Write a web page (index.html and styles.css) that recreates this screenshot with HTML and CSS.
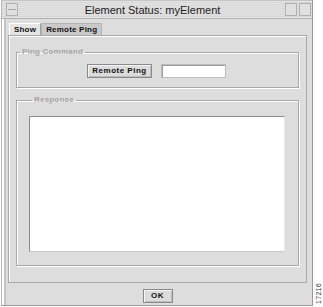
FILE: index.html
```
<!DOCTYPE HTML>
<html>
<head>
	<title>Element Status</title>
	<link rel="stylesheet" href="styles.css">
</head>
<body>
<div class="pencere">
	<div class="baslik">
		<span class="kutu kapat"><span class="cizgi"></span></span>
		<span class="baslikYazi">Element Status: myElement</span>
		<span class="kutu kucult"></span>
		<span class="kutu buyut"></span>
	</div>

	<div class="sekmeler">
		<span class="sekme secili">Show</span>
		<span class="sekme">Remote Ping</span>
	</div>

	<div class="panel">
		<fieldset class="grup ping">
			<legend>Ping Command</legend>
			<div class="satir">
				<button class="dugme genis">Remote Ping</button>
				<input class="alan" type="text">
			</div>
		</fieldset>

		<fieldset class="grup cevap">
			<legend>Response</legend>
			<div class="beyaz"></div>
		</fieldset>
	</div>

	<div class="alt">
		<button class="dugme tamam">OK</button>
	</div>
</div>
<span class="numara">17216</span>
</body>
</html>
```

FILE: styles.css
```
body {
	margin: 0;
	background-color: #ffffff;
	font-family: "Liberation Sans", sans-serif;
}

.pencere {
	width: 310px;
	height: 305px;
	background-color: #dddddd;
	border-left: 1px solid #b8b8b8;
	border-right: 1px solid #9a9a9a;
	border-bottom: 1px solid #9a9a9a;
	box-shadow: inset 2px 0 0 #ffffff, inset 4px 0 0 #c4c4c4;
	display: flex;
	flex-direction: column;
	margin-left: 1px;
}

.baslik {
	height: 17px;
	flex-shrink: 0;
	border-top: 1px solid #c4c4c4;
	border-bottom: 1px solid #b0b0b0;
	background: repeating-linear-gradient(#e4e4e4 0px, #e4e4e4 1px, #d6d6d6 1px, #d6d6d6 2px);
	display: flex;
	align-items: center;
	padding: 0 1px 0 4px;
}

.baslikYazi {
	flex: 1;
	text-align: center;
	font-size: 11px;
	color: #222222;
	background-color: #dddddd;
	margin: 0 6px;
	padding-left: 2px;
}

.kutu {
	width: 10px;
	height: 11px;
	border: 1px solid #b0b0b0;
	background-color: #e0e0e0;
	display: flex;
	align-items: center;
	justify-content: center;
}

.cizgi {
	width: 8px;
	height: 1px;
	background-color: #a8a8a8;
}

.kucult {
	margin-right: 2px;
}

.sekmeler {
	display: flex;
	flex-shrink: 0;
	margin: 4px 0 0 7px;
	height: 12px;
}

.sekme {
	font-size: 8px;
	font-weight: bold;
	letter-spacing: 0.2px;
	color: #111111;
	padding: 0 4px;
	line-height: 12px;
	border: 1px solid #b4b4b4;
	border-bottom: none;
	background-color: #c9c9c9;
}

.secili {
	background-color: #e4e4e4;
	border-color: #ffffff #a0a0a0 #ffffff #ffffff;
}

.panel {
	flex-shrink: 0;
	box-sizing: border-box;
	margin: 0 5px 0 6px;
	height: 248px;
	border: 1px solid #a8a8a8;
	box-shadow: inset 1px 1px 0 #ffffff;
	padding: 10px 7px 0 7px;
	display: flex;
	flex-direction: column;
}

.grup {
	flex-shrink: 0;
	margin: 0;
	padding: 0;
	border: 1px solid #a8a8a8;
	box-shadow: inset 1px 1px 0 #ffffff, 1px 1px 0 #ffffff;
}

legend {
	font-size: 8px;
	font-weight: bold;
	letter-spacing: 0.2px;
	color: #a4a4a4;
	margin-left: 3px;
	padding: 0 2px;
	line-height: 12px;
}

.satir {
	display: flex;
	justify-content: center;
	gap: 9px;
	margin: 6px 0 9px 0;
	padding-right: 2px;
}

.dugme {
	font-family: "Liberation Sans", sans-serif;
	font-size: 8px;
	font-weight: bold;
	letter-spacing: 0.5px;
	color: #111111;
	background-color: #dcdcdc;
	border: 1px solid #8a8a8a;
	box-shadow: inset 1px 1px 0 #f4f4f4, inset -1px -1px 0 #bcbcbc;
	padding: 0;
	height: 14px;
	line-height: 12px;
}

.genis {
	width: 65px;
}

.alan {
	width: 65px;
	height: 14px;
	box-sizing: border-box;
	border: 1px solid #bbbbbb;
	box-shadow: inset 1px 1px 0 #9c9c9c;
	background-color: #ffffff;
	padding: 0;
	margin: 0;
}

.cevap {
	margin-top: 6px;
	padding: 10px 13px 13px 12px;
}

.beyaz {
	height: 134px;
	background-color: #ffffff;
	border-top: 1px solid #8c8c8c;
	border-left: 1px solid #8c8c8c;
	border-right: 1px solid #e8e8e8;
	border-bottom: 1px solid #c8c8c8;
}

.alt {
	display: flex;
	justify-content: center;
	padding: 6px 0 0 0;
}

.tamam {
	width: 30px;
	margin-left: 1px;
}

.numara {
	position: absolute;
	left: 315px;
	top: 283px;
	writing-mode: vertical-rl;
	transform: rotate(180deg);
	font-size: 7px;
	line-height: 7px;
	color: #333333;
	letter-spacing: 0.3px;
}
```
